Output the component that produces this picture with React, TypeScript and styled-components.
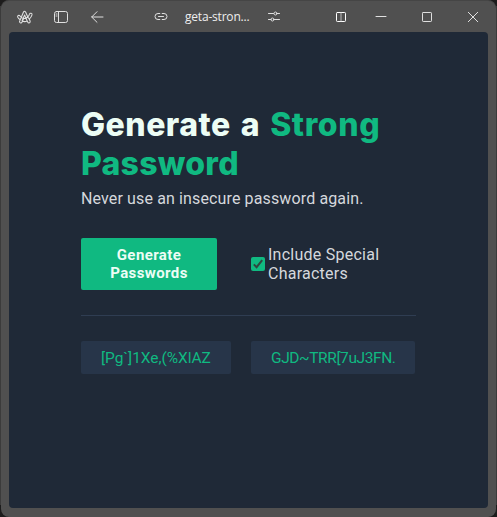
import React from 'react';
import styled, { createGlobalStyle } from 'styled-components';

const GlobalStyle = createGlobalStyle`
  * { box-sizing: border-box; }
  body { margin: 0; background: #3a3938; overflow: hidden; }
`;

const Desktop = styled.div`
  width: 497px;
  height: 517px;
  padding: 0 0 0 1px;
  background: linear-gradient(#1d1c1c 0 6px, #3b3b3b 6px 505px, #1c1c1c 505px);
`;

const BrowserWindow = styled.div`
  width: 495px;
  height: 517px;
  padding: 0 8px 9px;
  display: flex;
  flex-direction: column;
  background: #505050;
  border-top: 1px solid #454545;
  border-radius: 8px;
`;

const TitleBar = styled.header`
  height: 31px;
  flex: none;
  display: flex;
  align-items: center;
  color: #e0e0e0;
  svg { display: block; flex: none; overflow: visible; }
`;

const IconSlot = styled.span<{ $before: number }>`
  margin-left: ${(p) => p.$before}px;
`;

const Address = styled.span`
  width: 66px;
  margin-left: 18px;
  font: 12px/16px 'Open Sans', sans-serif;
  letter-spacing: -0.2px;
  white-space: nowrap;
  color: #eeeeee;
`;

const Page = styled.main`
  flex: 1;
  padding: 73px 72px 0;
  background: #1f2937;
  border-radius: 4px;
  color: #d5d8dd;
  font-family: Roboto, sans-serif;
`;

const Title = styled.h1`
  margin: 0;
  font: 800 32px/39px Inter, sans-serif;
  letter-spacing: 0.5px;
  word-spacing: 2.6px;
  color: #ecfdf5;
  white-space: nowrap;
`;

const Accent = styled.span<{ $tracking: number }>`
  color: #10b981;
  letter-spacing: ${(p) => p.$tracking}px;
`;

const Tagline = styled.p`
  margin: 6px 0 0;
  font-size: 16px;
  line-height: 19px;
  letter-spacing: 0.13px;
  white-space: nowrap;
`;

const Controls = styled.div`
  display: flex;
  align-items: center;
  margin-top: 30px;
  height: 52px;
`;

const GenerateButton = styled.button`
  width: 136px;
  height: 52px;
  padding: 0;
  border: 0;
  border-radius: 2px;
  background: #10b981;
  color: #ecfdf5;
  font: 700 15px/18px Roboto, sans-serif;
  letter-spacing: 0.4px;
`;

const Option = styled.label`
  display: flex;
  align-items: center;
  gap: 3px;
  margin-left: 34px;
  font-size: 16px;
  line-height: 19px;
  letter-spacing: 0.25px;
  white-space: nowrap;
`;

const CheckMark = styled.span`
  width: 14px;
  height: 14px;
  border-radius: 2px;
  background: #10b981;
  svg { display: block; }
`;

const Divider = styled.hr`
  height: 1px;
  width: 335px;
  margin: 25px 0;
  border: 0;
  background: #2f3d52;
`;

const Results = styled.div`
  display: flex;
  gap: 20px;
`;

const Password = styled.output<{ $width: number; $tracking: number }>`
  width: ${(p) => p.$width}px;
  height: 33px;
  padding-left: 20px;
  border-radius: 2px;
  background: #273549;
  color: #10b981;
  font-size: 15.5px;
  line-height: 34px;
  letter-spacing: ${(p) => p.$tracking}px;
  white-space: nowrap;
`;

const stroke = { fill: 'none', stroke: 'currentColor', strokeLinecap: 'round', strokeLinejoin: 'round' } as const;

const ArcLogo = () => (
  <svg width="16" height="14" viewBox="0 0 16 14" {...stroke} strokeWidth="1.05">
    <path d="M4.1 7.7 6.4 2.2Q7.4.2 8.7 2.2L10.8 7Q11.9 5.9 12.5 4.2C13 2.6 15.4 3.1 15 4.9Q14.2 7.4 12.3 9.2L13.1 11C13.8 12.8 11.5 13.7 10.7 12L10.2 11Q7.9 12.1 5.5 11.2L5.1 12C4.3 13.8 1.9 12.8 2.7 11L3.2 9.8Q1.6 8.7.8 7.2C0 5.6 2.1 4.7 3 6Q4.6 8.3 7.4 8.6Q9.2 8.5 10.8 7M5.5 11.2 6.6 8.5M10.2 11 7.6 5 5.1 10.8M4.1 7.7 3.2 9.8M10.8 7 12.3 9.2" />
  </svg>
);

const SidebarIcon = () => (
  <svg width="14" height="12" viewBox="0 0 14 12" {...stroke}>
    <rect x=".5" y=".5" width="13" height="11" rx="2" /><path d="M4.5.5v11M2 3h1M2 5h1" />
  </svg>
);

const BackIcon = () => (
  <svg width="13" height="12" viewBox="0 0 13 12" {...stroke}>
    <path d="M12 6H.7M6 .7.7 6 6 11.3" />
  </svg>
);

const LinkIcon = () => (
  <svg width="12" height="7" viewBox="0 0 12 7" {...stroke}>
    <path d="M4.8.5H3a3 3 0 0 0 0 6h1.8M7.2.5H9a3 3 0 0 1 0 6H7.2M3.5 3.5h5" />
  </svg>
);

const SlidersIcon = () => (
  <svg width="12" height="11" viewBox="0 0 12 11" {...stroke}>
    <path d="M.5 2.5h5M9 2.5h2.5M.5 8.5H3M6 8.5h5.5" /><circle cx="7.5" cy="2.5" r="1.5" /><circle cx="4.5" cy="8.5" r="1.5" />
  </svg>
);

const SplitIcon = () => (
  <svg width="10" height="10" viewBox="0 0 10 10" {...stroke}>
    <rect x=".5" y=".5" width="9" height="9" rx=".8" stroke="#fff" /><path d="M5 1v8" stroke="#bbb" />
  </svg>
);

const MinimizeIcon = () => <svg width="10" height="2" viewBox="0 0 10 2" {...stroke}><path d="M0 .5h10" /></svg>;
const MaximizeIcon = () => <svg width="10" height="10" viewBox="0 0 10 10" {...stroke}><rect x=".5" y=".5" width="9" height="9" rx=".7" /></svg>;
const CloseIcon = () => <svg width="10" height="10" viewBox="0 0 10 10" {...stroke}><path d="m.3.3 9.4 9.4M9.7.3.3 9.7" /></svg>;

export default function App() {
  return (
    <Desktop>
      <GlobalStyle />
      <BrowserWindow>
        <TitleBar>
          <IconSlot $before={8}><ArcLogo /></IconSlot>
          <IconSlot $before={21}><SidebarIcon /></IconSlot>
          <IconSlot $before={23}><BackIcon /></IconSlot>
          <IconSlot $before={51}><LinkIcon /></IconSlot>
          <Address>geta-stron...</Address>
          <IconSlot $before={17}><SlidersIcon /></IconSlot>
          <IconSlot $before={56}><SplitIcon /></IconSlot>
          <IconSlot $before={30}><MinimizeIcon /></IconSlot>
          <IconSlot $before={36}><MaximizeIcon /></IconSlot>
          <IconSlot $before={36}><CloseIcon /></IconSlot>
        </TitleBar>
        <Page>
          <Title>
            Generate a <Accent $tracking={0.6}>Strong</Accent><br />
            <Accent $tracking={0.25}>Password</Accent>
          </Title>
          <Tagline>Never use an insecure password again.</Tagline>
          <Controls>
            <GenerateButton>Generate<br />Passwords</GenerateButton>
            <Option>
              <CheckMark role="checkbox" aria-checked="true">
                <svg width="14" height="14" viewBox="0 0 14 14" fill="none"><path d="m2.8 7.4 2.8 2.8 5.6-7" stroke="#30463f" strokeWidth="2" /></svg>
              </CheckMark>
              <span>Include Special<br />Characters</span>
            </Option>
          </Controls>
          <Divider />
          <Results>
            <Password $width={150} $tracking={-0.05}>[Pg`]1Xe,(%XlAZ</Password>
            <Password $width={164} $tracking={-0.4}>GJD~TRR[7uJ3FN.</Password>
          </Results>
        </Page>
      </BrowserWindow>
    </Desktop>
  );
}
